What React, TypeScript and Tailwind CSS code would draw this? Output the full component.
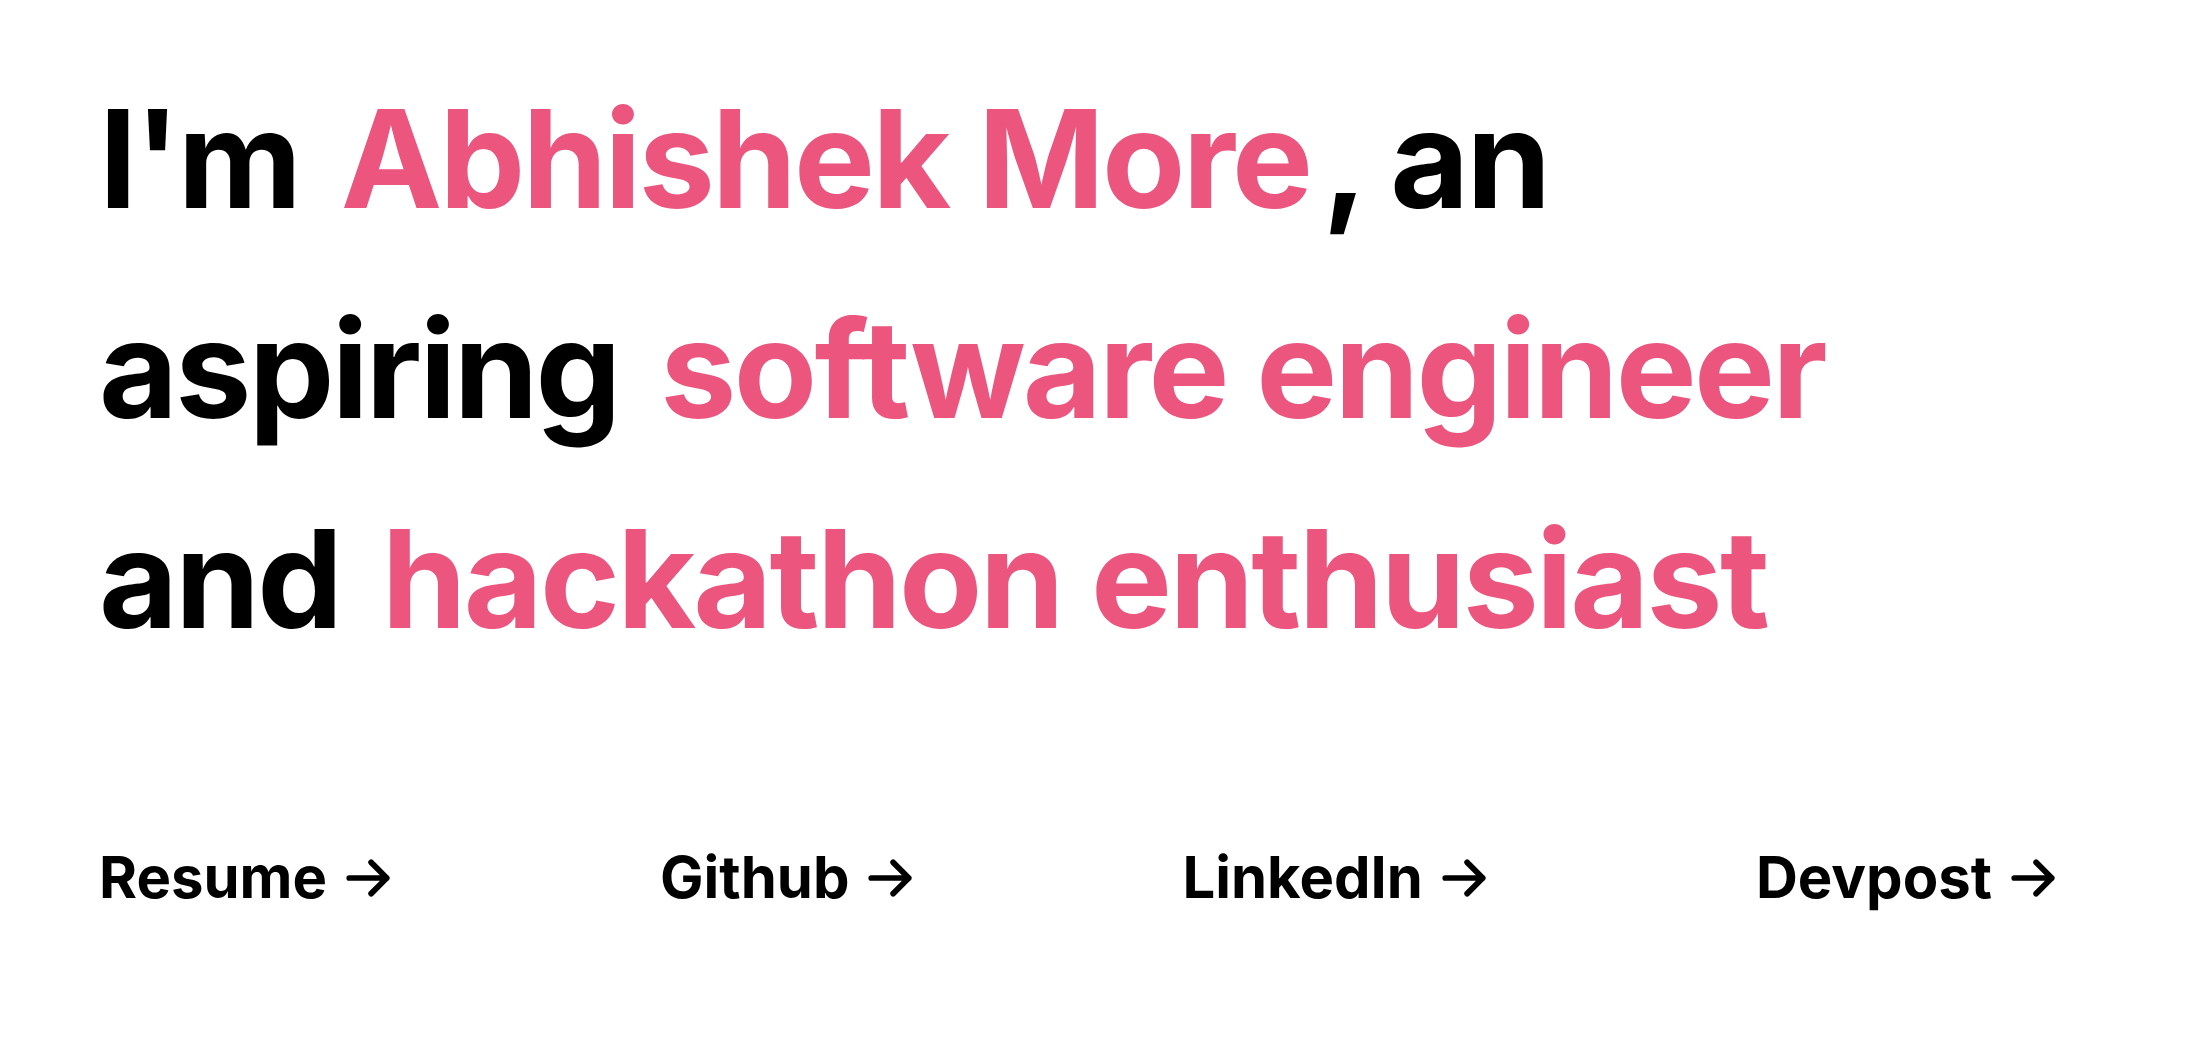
import React from 'react';

const links = ['Resume', 'Github', 'LinkedIn', 'Devpost'];

const Arrow = () => (
  <svg viewBox="0 0 24 24" fill="none" stroke="currentColor" strokeWidth={2.75} strokeLinecap="round" strokeLinejoin="round" className="w-[50px] h-[50px] shrink-0">
    <path d="M13.5 4.5 21 12m0 0-7.5 7.5M21 12H3" />
  </svg>
);

const App: React.FC = () => {
  return (
    <div className="min-h-screen bg-white text-black font-['Inter','Liberation_Sans',sans-serif]">
      <div className="pl-[99px] pr-[150px] pt-[54px]">
        {/* Intro */}
        <h1 className="text-[136px] leading-[210px] font-bold tracking-[-0.02em]">
          I'm <span className="mx-3 text-[#eb557e]">Abhishek More</span>, an aspiring{' '}
          <span className="mx-3 text-[#eb557e]">software engineer</span> and{' '}
          <span className="mx-3 text-[#eb557e]">hackathon enthusiast</span>
        </h1>

        {/* Links */}
        <div className="mt-[150px] flex justify-between items-center">
          {links.map(l => (
            <a key={l} href="#" className="flex items-center gap-4 text-[58px] font-bold">
              <span>{l}</span>
              <Arrow />
            </a>
          ))}
        </div>
      </div>
    </div>
  );
};

export default App;
